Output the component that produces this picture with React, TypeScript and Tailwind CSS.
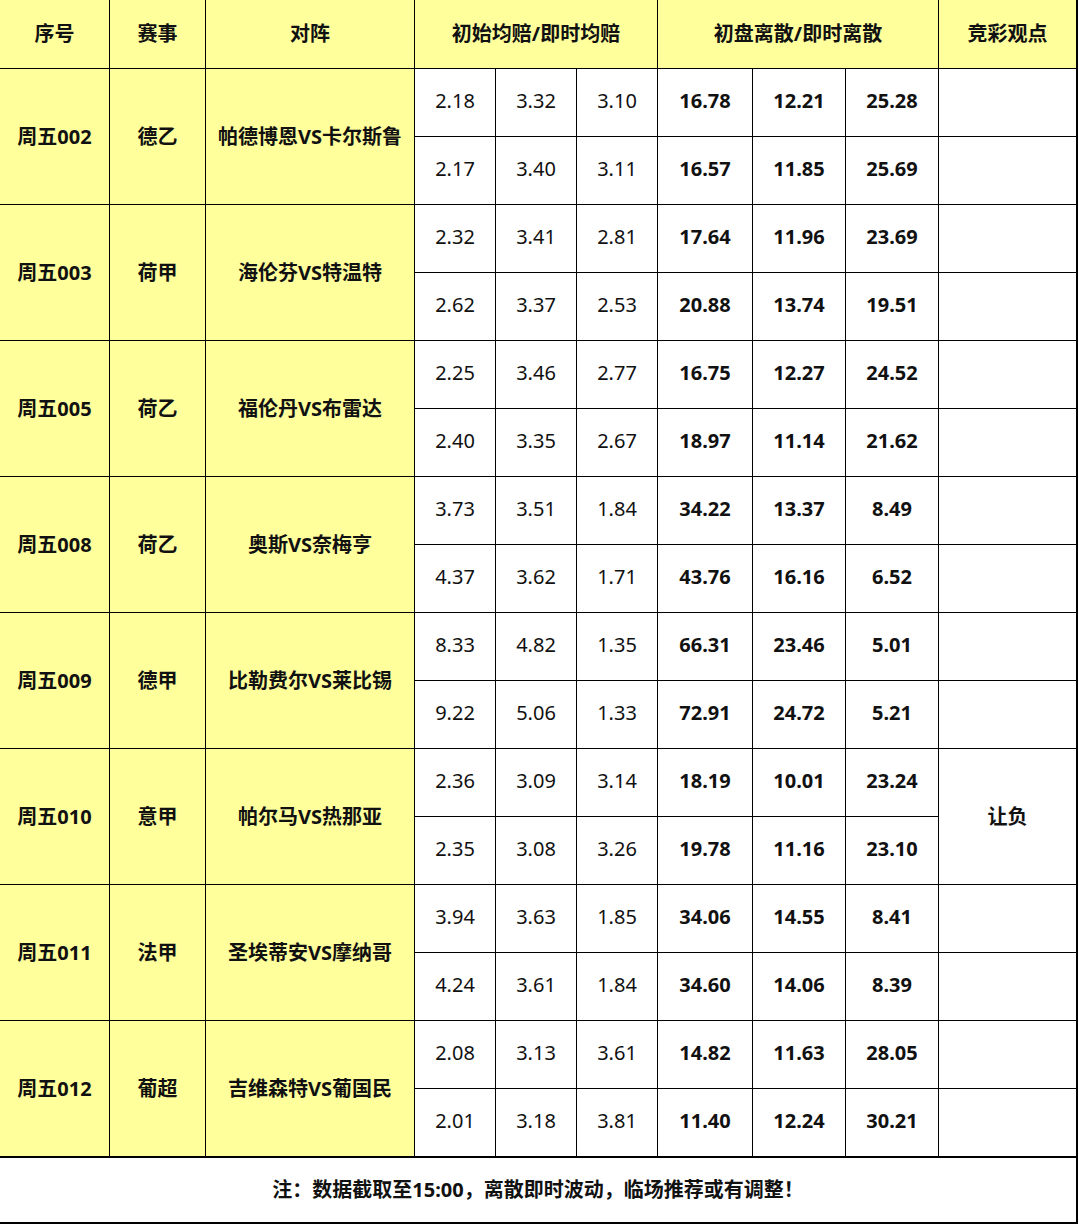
const matches = [
  { no: "周五002", league: "德乙", vs: "帕德博恩VS卡尔斯鲁", rows: [["2.18", "3.32", "3.10", "16.78", "12.21", "25.28"], ["2.17", "3.40", "3.11", "16.57", "11.85", "25.69"]] },
  { no: "周五003", league: "荷甲", vs: "海伦芬VS特温特", rows: [["2.32", "3.41", "2.81", "17.64", "11.96", "23.69"], ["2.62", "3.37", "2.53", "20.88", "13.74", "19.51"]] },
  { no: "周五005", league: "荷乙", vs: "福伦丹VS布雷达", rows: [["2.25", "3.46", "2.77", "16.75", "12.27", "24.52"], ["2.40", "3.35", "2.67", "18.97", "11.14", "21.62"]] },
  { no: "周五008", league: "荷乙", vs: "奥斯VS奈梅亨", rows: [["3.73", "3.51", "1.84", "34.22", "13.37", "8.49"], ["4.37", "3.62", "1.71", "43.76", "16.16", "6.52"]] },
  { no: "周五009", league: "德甲", vs: "比勒费尔VS莱比锡", rows: [["8.33", "4.82", "1.35", "66.31", "23.46", "5.01"], ["9.22", "5.06", "1.33", "72.91", "24.72", "5.21"]] },
  { no: "周五010", league: "意甲", vs: "帕尔马VS热那亚", rows: [["2.36", "3.09", "3.14", "18.19", "10.01", "23.24"], ["2.35", "3.08", "3.26", "19.78", "11.16", "23.10"]], tip: "让负" },
  { no: "周五011", league: "法甲", vs: "圣埃蒂安VS摩纳哥", rows: [["3.94", "3.63", "1.85", "34.06", "14.55", "8.41"], ["4.24", "3.61", "1.84", "34.60", "14.06", "8.39"]] },
  { no: "周五012", league: "葡超", vs: "吉维森特VS葡国民", rows: [["2.08", "3.13", "3.61", "14.82", "11.63", "28.05"], ["2.01", "3.18", "3.81", "11.40", "12.24", "30.21"]] },
]

const yellow = "flex items-center justify-center bg-[#ffff9c] font-bold"
const white = "flex items-center justify-center bg-white pb-[3px]"

export default function App() {
  return (
    <div
      className="w-[1079px] bg-white text-[20px] text-[#111]"
      style={{ fontFamily: '"Noto Sans", "Noto Sans CJK SC", sans-serif' }}
    >
      <div className="w-[1078px] border-r-2 border-black">
        <div className="grid grid-cols-[109px_95px_208px_80px_80px_80px_94px_92px_92px_137px] grid-rows-[68px_repeat(16,67px)] gap-px bg-black">
          <div className={yellow}>序号</div>
          <div className={yellow}>赛事</div>
          <div className={yellow}>对阵</div>
          <div className={`${yellow} col-span-3`}>初始均赔/即时均赔</div>
          <div className={`${yellow} col-span-3`}>初盘离散/即时离散</div>
          <div className={yellow}>竞彩观点</div>

          {matches.map((m) => (
            <Match key={m.no} m={m} />
          ))}
        </div>
        <div className="flex h-[68px] items-center justify-center border-y-2 border-black font-bold">
          注：数据截取至15:00，离散即时波动，临场推荐或有调整！
        </div>
      </div>
    </div>
  )
}

function Match({ m }: { m: (typeof matches)[number] }) {
  return (
    <>
      <div className={`${yellow} row-span-2`}>{m.no}</div>
      <div className={`${yellow} row-span-2`}>{m.league}</div>
      <div className={`${yellow} row-span-2`}>{m.vs}</div>
      {m.rows.map((r, i) => (
        <Row key={i} r={r} first={i === 0} tip={m.tip} />
      ))}
    </>
  )
}

function Row({ r, first, tip }: { r: string[]; first: boolean; tip?: string }) {
  return (
    <>
      {r.map((v, j) => (
        <div key={j} className={`${white} ${j >= 3 ? "font-bold" : ""}`}>
          {v}
        </div>
      ))}
      {tip ? (
        first && <div className="row-span-2 flex items-center justify-center bg-white font-bold">{tip}</div>
      ) : (
        <div className="bg-white" />
      )}
    </>
  )
}
